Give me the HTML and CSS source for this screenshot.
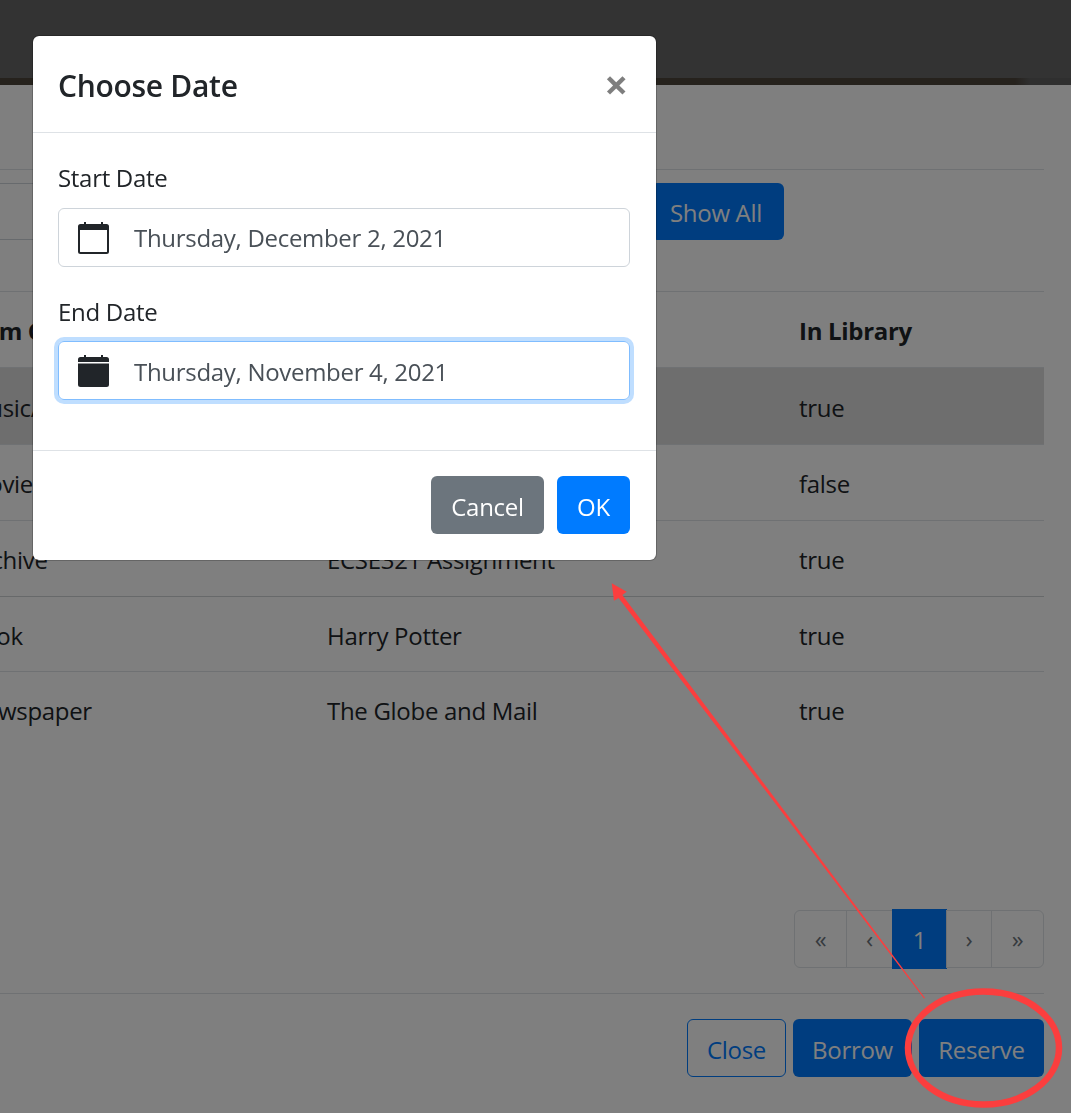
FILE: index.html
```html
<!DOCTYPE html>
<html lang="en">
<head>
  <meta charset="UTF-8">
  <title>Choose Date</title>
  <link rel="stylesheet" href="styles.css">
</head>
<body>
  <div class="topbar"></div>
  <div class="topbar-edge"></div>

  <main class="page">
    <div class="page-head"></div>

    <div class="search-row">
      <input class="search-input" type="text">
      <button class="btn btn-primary btn-show">Show All</button>
    </div>

    <table class="items">
      <colgroup>
        <col class="col-type">
        <col class="col-title">
        <col class="col-lib">
      </colgroup>
      <thead>
        <tr><th>Item Category</th><th>Title</th><th>In Library</th></tr>
      </thead>
      <tbody>
        <tr class="row-active"><td>Music/</td><td></td><td>true</td></tr>
        <tr><td>Movie</td><td></td><td>false</td></tr>
        <tr class="row-thick"><td>Archive</td><td>ECSE321 Assignment</td><td>true</td></tr>
        <tr class="row-short"><td>Book</td><td>Harry Potter</td><td>true</td></tr>
        <tr><td>Newspaper</td><td>The Globe and Mail</td><td>true</td></tr>
      </tbody>
    </table>

    <ul class="pager">
      <li class="pager-item pager-first">«</li>
      <li class="pager-item pager-prev">‹</li>
      <li class="pager-item pager-current">1</li>
      <li class="pager-item pager-next">›</li>
      <li class="pager-item pager-last">»</li>
    </ul>

    <div class="page-foot">
      <button class="btn btn-outline btn-close">Close</button>
      <button class="btn btn-primary btn-borrow">Borrow</button>
      <button class="btn btn-primary btn-reserve">Reserve</button>
    </div>
  </main>

  <div class="backdrop"></div>

  <section class="modal">
    <header class="modal-head">
      <h2 class="modal-title">Choose Date</h2>
      <span class="modal-close">×</span>
    </header>

    <div class="modal-body">
      <label class="field-label">Start Date</label>
      <div class="date-field">
        <svg class="cal-icon" viewBox="0 0 31 32">
          <path d="M6 0h2v3H6zM23 0h2v3h-2z" fill="#212529"/>
          <path d="M2.500 2h26A2.500 2.500 0 0 1 31 4.500v25a2.500 2.500 0 0 1-2.500 2.500h-26A2.500 2.500 0 0 1 0 29.500v-25A2.500 2.500 0 0 1 2.500 2zM2 8v21.500a.5.5 0 0 0 .5.5h26a.5.5 0 0 0 .5-.5V8z" fill="#212529" fill-rule="evenodd"/>
        </svg>
        <span class="date-value">Thursday, December 2, 2021</span>
      </div>

      <label class="field-label field-label-end">End Date</label>
      <div class="date-field date-field-focus">
        <svg class="cal-icon" viewBox="0 0 31 32">
          <path d="M6 0h2v3H6zM23 0h2v3h-2z" fill="#212529"/>
          <path d="M2.500 2h26A2.500 2.500 0 0 1 31 4.500V7H0V4.500A2.500 2.500 0 0 1 2.500 2zM0 8.500h31v21a2.500 2.500 0 0 1-2.500 2.500h-26A2.500 2.500 0 0 1 0 29.500z" fill="#212529"/>
        </svg>
        <span class="date-value">Thursday, November 4, 2021</span>
      </div>
    </div>

    <footer class="modal-foot">
      <button class="btn btn-secondary btn-cancel">Cancel</button>
      <button class="btn btn-primary btn-ok">OK</button>
    </footer>
  </section>

  <!-- red marks drawn on the screenshot -->
  <svg class="marks" viewBox="0 0 1071 1113">
    <path d="M611.700 583.300L626.700 591.700L622.300 595L925 998L924 998.600L618.600 598L614 600.700Z" fill="#fb3e3e"/>
    <ellipse cx="983.500" cy="1048" rx="75.500" ry="56.500" fill="none" stroke="#fb3e3e" stroke-width="6.500"/>
  </svg>
</body>
</html>
```

FILE: styles.css
```css
* {
  box-sizing: border-box;
}

html, body {
  margin: 0;
  height: 1113px;
  overflow: hidden;
}

body {
  font-family: "Open Sans", "Noto Sans", sans-serif;
  font-size: 24px;
  letter-spacing: -0.3px;
  line-height: 36px;
  color: #212529;
  background: #fff;
}

.topbar {
  height: 78px;
  background: #666;
}

.topbar-edge {
  height: 7px;
  background: linear-gradient(to right, #4c443b 1015px, #5e5e5e 1030px);
}

/* the first column runs off the left edge of the window */
.page {
  margin-left: -51px;
  margin-right: 27px;
}

.page-head {
  height: 85px;
  border-bottom: 1px solid #dee2e6;
}

.search-row {
  display: flex;
  justify-content: flex-start;
  gap: 0;
  padding: 13px 0 51px;
  border-bottom: 1px solid #dee2e6;
}

.search-input {
  width: 702px;
  height: 57px;
  border: 1px solid #ced4da;
}

.btn {
  height: 58px;
  padding: 3px 0 0;
  border: 1px solid transparent;
  border-radius: 6px;
  font: inherit;
  letter-spacing: inherit;
  text-align: center;
}

.btn-primary {
  background: #007bff;
  color: #fff;
}

.btn-secondary {
  background: #6c757d;
  color: #fff;
}

.btn-outline {
  background: transparent;
  border-color: #007bff;
  color: #007bff;
}

.btn-show {
  width: 133px;
  height: 57px;
  padding-right: 3px;
}

.items {
  width: 100%;
  table-layout: fixed;
  border-collapse: collapse;
}

.col-type {
  width: 360px;
}

.col-title {
  width: 472px;
}

.items th,
.items td {
  padding: 21px 18px 17px;
  text-align: left;
  border-top: 1px solid #dee2e6;
}

.items th {
  height: 75px;
  font-weight: 700;
  border-top: 0;
}

.items td {
  height: 76px;
}

.items .row-active td {
  height: 77px;
}

.items .row-short td {
  height: 75px;
}

.row-active td {
  background: #ddd;
}

.row-thick td {
  border-bottom: 1px solid #cfd2d5;
}

.pager {
  display: flex;
  justify-content: flex-end;
  margin: 163px 0 0;
  padding: 0;
  list-style: none;
}

.pager-item {
  display: flex;
  align-items: center;
  justify-content: center;
  height: 58px;
  border: 1px solid #dee2e6;
  margin-left: -1px;
  color: #6c757d;
}

.pager-first {
  width: 53px;
  border-radius: 6px 0 0 6px;
}

.pager-prev {
  width: 47px;
}

.pager-current {
  width: 55px;
  height: 60px;
  margin-top: -1px;
  padding-top: 2px;
  background: #007bff;
  border-color: #007bff;
  color: #fff;
}

.pager-next {
  width: 46px;
}

.pager-last {
  width: 53px;
  border-radius: 0 6px 6px 0;
}

.page-foot {
  display: flex;
  justify-content: flex-end;
  gap: 7px;
  margin-top: 24px;
  padding-top: 25px;
  border-top: 1px solid #dee2e6;
}

.btn-close {
  width: 99px;
}

.btn-borrow {
  width: 119px;
}

.btn-reserve {
  width: 125px;
}

.backdrop {
  position: fixed;
  inset: 0;
  background: rgba(0, 0, 0, 0.5);
}

.modal {
  position: absolute;
  top: 35px;
  left: 32px;
  width: 625px;
  height: 526px;
  display: flex;
  flex-direction: column;
  background: #fff;
  background-clip: padding-box;
  border: 1px solid rgba(0, 0, 0, 0.2);
  border-radius: 7px;
}

.modal-head {
  display: flex;
  align-items: center;
  justify-content: space-between;
  height: 97px;
  padding: 0 28px 0 25px;
  border-bottom: 1px solid #dee2e6;
}

.modal-title {
  margin: 4px 0 0;
  font-size: 30px;
  font-weight: 600;
  line-height: 44px;
}

.modal-close {
  font-size: 42px;
  font-weight: 700;
  line-height: 44px;
  color: #000;
  opacity: 0.5;
}

.modal-body {
  flex: 1;
  padding: 27px 26px 0 25px;
}

.field-label {
  display: block;
  margin-bottom: 12px;
}

.field-label-end {
  margin-top: 27px;
  margin-bottom: 11px;
}

.date-field {
  display: flex;
  align-items: center;
  height: 59px;
  padding-left: 19px;
  border: 1px solid #ced4da;
  border-radius: 6px;
}

.date-field-focus {
  border-color: #80bdff;
  box-shadow: 0 0 0 4px rgba(0, 123, 255, 0.25);
}

.cal-icon {
  flex: none;
  width: 31px;
  height: 32px;
}

.date-value {
  margin-left: 25px;
  color: #495057;
}

.date-field-focus .date-value {
  padding-top: 2px;
}

.modal-foot {
  display: flex;
  justify-content: flex-end;
  gap: 13px;
  height: 110px;
  padding: 25px 26px 0 0;
  border-top: 1px solid #dee2e6;
}

.btn-cancel {
  width: 113px;
}

.btn-ok {
  width: 73px;
}

.marks {
  position: absolute;
  top: 0;
  left: 0;
  width: 1071px;
  height: 1113px;
  pointer-events: none;
}
```
